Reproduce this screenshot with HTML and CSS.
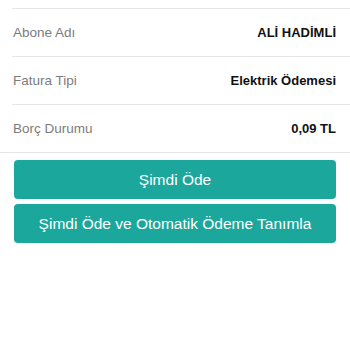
FILE: index.html
```html
<!DOCTYPE html>
<html lang="tr">
<head>
<meta charset="utf-8">
<title>Fatura</title>
<link rel="stylesheet" href="styles.css">
</head>
<body>
<div class="page">
  <ul class="details">
    <li class="row"><span class="label">Abone Adı</span><span class="value">ALİ HADİMLİ</span></li>
    <li class="row"><span class="label">Fatura Tipi</span><span class="value">Elektrik Ödemesi</span></li>
    <li class="row"><span class="label">Borç Durumu</span><span class="value">0,09 TL</span></li>
  </ul>
  <div class="actions">
    <button class="btn">Şimdi Öde</button>
    <button class="btn">Şimdi Öde ve Otomatik Ödeme Tanımla</button>
  </div>
</div>
</body>
</html>
```

FILE: styles.css
```css
html, body {
  margin: 0;
  padding: 0;
  background: #ffffff;
}
.page {
  font-family: "Liberation Sans", Arial, sans-serif;
  padding-top: 8px;
}
.details {
  list-style: none;
  margin: 0 0 0 12px;
  padding: 0;
}
.row {
  display: flex;
  align-items: center;
  justify-content: space-between;
  height: 47px;
  border-top: 1px solid #e6e6e6;
  padding: 0 14px 0 1px;
}
.label {
  font-size: 13.5px;
  color: #7c7c7c;
}
.value {
  font-size: 13px;
  font-weight: bold;
  color: #111111;
}
.actions {
  border-top: 1px solid #e6e6e6;
  padding: 7px 14px;
  display: flex;
  flex-direction: column;
  gap: 5px;
}
.btn {
  height: 39px;
  border: none;
  border-radius: 4px;
  background: #1ca79c;
  color: #ffffff;
  font-family: "Liberation Sans", Arial, sans-serif;
  font-size: 15.5px;
  padding: 0;
  cursor: pointer;
}
```
